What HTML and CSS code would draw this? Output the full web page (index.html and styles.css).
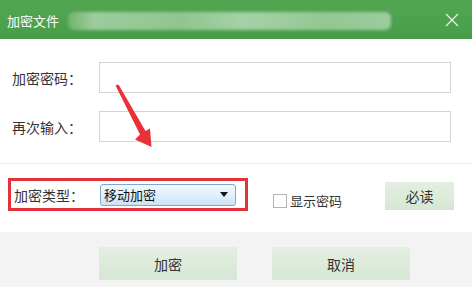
FILE: index.html
```html
<!DOCTYPE html>
<html lang="zh">
<head>
<meta charset="utf-8">
<link rel="stylesheet" href="styles.css">
</head>
<body>
<div class="dialog">
  <div class="titlebar">
    <span class="title">加密文件</span>
    <span class="blur"></span>
    <svg class="close" width="14" height="14" viewBox="0 0 14 14"><path d="M1 1 L13 13 M13 1 L1 13" stroke="#e6f3e6" stroke-width="1.3" fill="none"/></svg>
  </div>
  <div class="form">
    <div class="row">
      <label class="lbl">加密密码：</label>
      <div class="input"></div>
    </div>
    <div class="row">
      <label class="lbl">再次输入：</label>
      <div class="input"></div>
    </div>
  </div>
  <div class="type-row">
    <div class="mark">
      <span class="lbl">加密类型：</span>
      <div class="select"><span>移动加密</span><svg width="8" height="5" viewBox="0 0 8 5"><path d="M0 0 H8 L4 5 Z" fill="#111"/></svg></div>
    </div>
    <label class="check"><span class="box"></span><span>显示密码</span></label>
    <div class="btn small">必读</div>
  </div>
  <div class="footer">
    <div class="btn big">加密</div>
    <div class="btn big">取消</div>
  </div>
  <svg class="arrow" width="472" height="287" viewBox="0 0 472 287"><polygon points="115.5,85.5 118.5,84.5 145.5,131 150,128.5 151.5,147 135,139.5 140,134.5" fill="#e8323a"/></svg>
</div>
</body>
</html>
```
FILE: styles.css
```css
html, body { margin: 0; padding: 0; }
body { width: 472px; height: 287px; overflow: hidden; background: #fff; font-family: "Noto Sans CJK SC", "Noto Sans", sans-serif; color: #333; }
.dialog { position: relative; width: 472px; height: 287px; display: flex; flex-direction: column; }
.titlebar { height: 39px; background: linear-gradient(180deg, #52a652 0%, #4ca24c 60%, #489c49 100%); display: flex; align-items: center; padding-left: 7px; padding-right: 13px; box-sizing: border-box; }
.title { font-size: 13px; color: #fff; line-height: 1; margin-top: 1px; }
.blur { width: 323px; height: 18px; margin-left: 9px; margin-top: 2px; background: linear-gradient(90deg, rgba(255,255,255,0.2) 0%, rgba(255,255,255,0.45) 8%, rgba(255,255,255,0.38) 35%, rgba(255,255,255,0.5) 55%, rgba(255,255,255,0.4) 80%, rgba(255,255,255,0.45) 100%); filter: blur(1.5px); border-radius: 6px; }
.close { margin-left: auto; margin-top: 1px; }
.form { padding: 23px 21px 21px 12px; display: flex; flex-direction: column; gap: 18px; border-bottom: 1px solid #eeeeee; }
.row { display: flex; align-items: center; }
.lbl { width: 87px; font-size: 14px; color: #333; line-height: 1; }
.input { width: 350px; height: 29px; border: 1px solid #d4d4d4; background: #fff; }
.type-row { height: 68px; display: flex; align-items: flex-start; padding-left: 8px; box-sizing: border-box; }
.mark { margin-top: 14px; width: 233px; height: 27px; border: 3px solid #e2333b; display: flex; align-items: center; padding-left: 1px; }
.mark .lbl { padding-left: 2px; width: 86px; }
.select { width: 136px; height: 22px; box-sizing: border-box; border: 1px solid #7ea9cc; border-radius: 3px; background: linear-gradient(180deg, #f3f9fe 0%, #e2f0fb 50%, #cbe3f6 100%); display: flex; align-items: center; justify-content: space-between; padding: 0 7px 0 3px; font-size: 13px; color: #111; }
.check { margin-left: 25px; margin-top: 27px; display: flex; align-items: center; font-size: 13px; color: #333; }
.box { width: 12px; height: 12px; border: 1px solid #b5b5b5; background: #fff; margin-right: 3px; }
.btn { background: linear-gradient(180deg, #e3efe1 0%, #d6e7d4 100%); display: flex; align-items: center; justify-content: center; color: #333; font-size: 14px; }
.small { width: 69px; height: 28px; margin-left: 43px; margin-top: 18px; }
.footer { flex: 1; background: #f3f3f3; display: flex; align-items: flex-start; padding: 15px 0 0 99px; gap: 35px; }
.big { width: 138px; height: 33px; }
.arrow { position: absolute; left: 0; top: 0; pointer-events: none; }
```
